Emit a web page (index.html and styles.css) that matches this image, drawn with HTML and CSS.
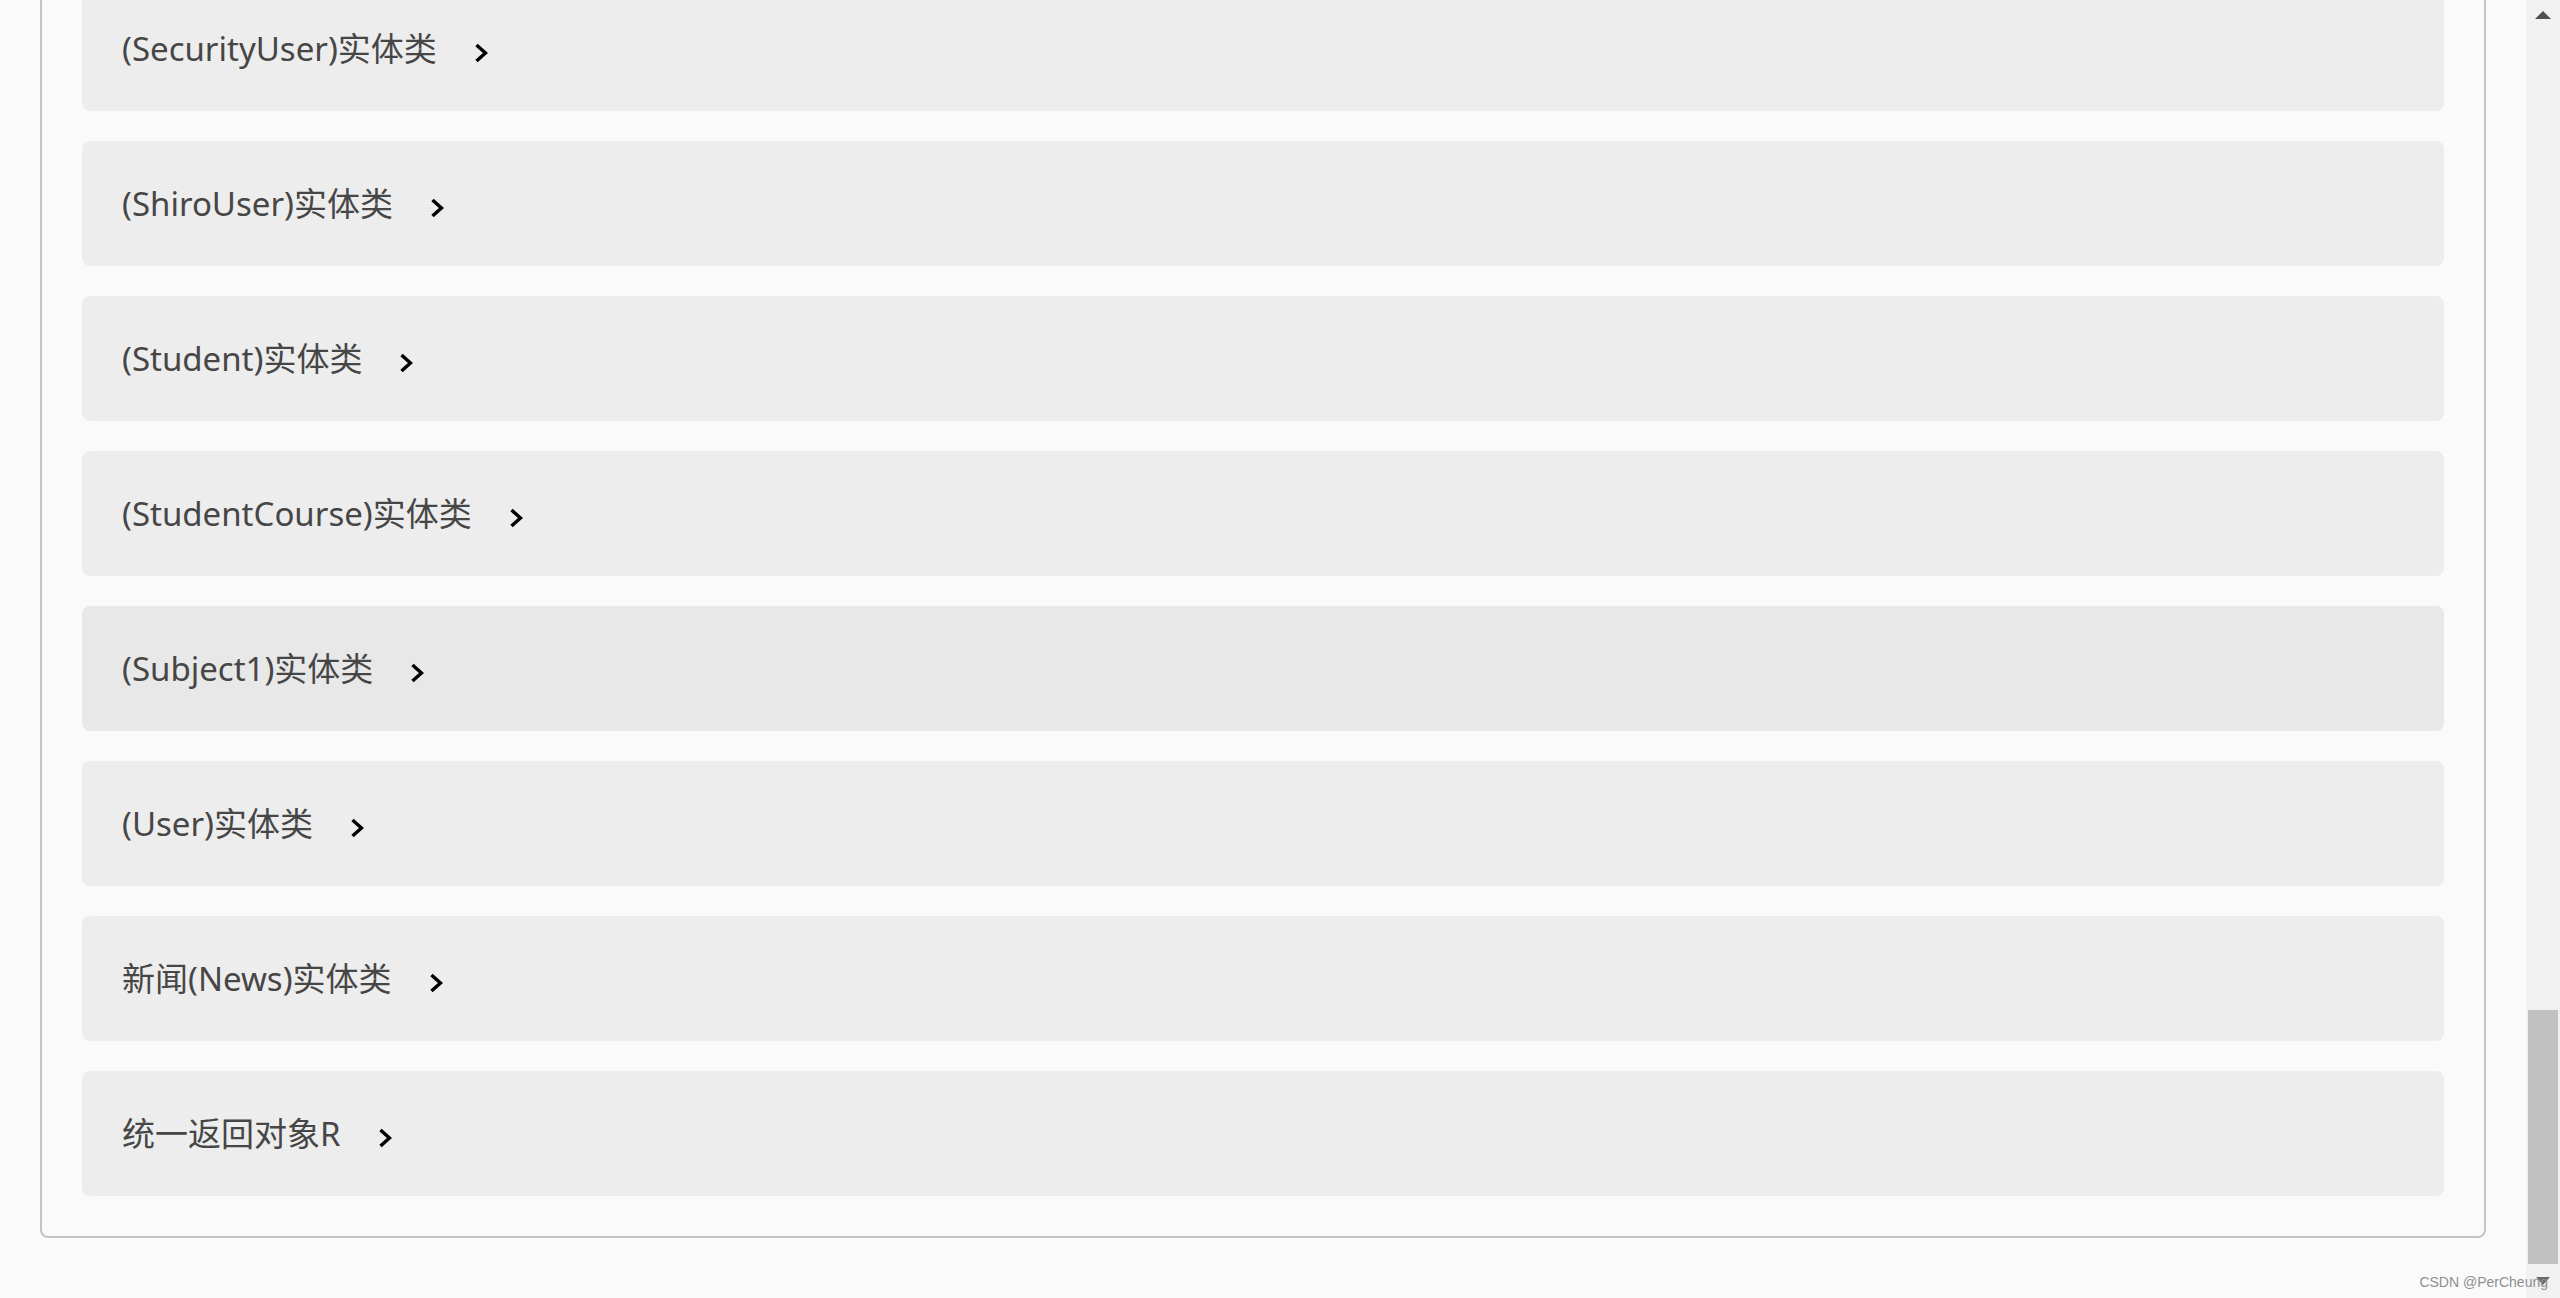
FILE: index.html
```html
<!DOCTYPE html>
<html lang="zh-CN">
<head>
    <meta charset="UTF-8">
    <meta name="viewport" content="width=device-width, initial-scale=1.0">
    <title>实体类</title>
    <link rel="stylesheet" href="styles.css">
</head>
<body>

    <div class="page">
        <main class="content">
            <div class="panel">
                <div class="item">
                    <span class="item-title">(SecurityUser)实体类</span>
                    <svg class="chevron" viewBox="0 0 14 20"><path d="M2.5 2 L11.5 10 L2.5 18"/></svg>
                </div>
                <div class="item">
                    <span class="item-title">(ShiroUser)实体类</span>
                    <svg class="chevron" viewBox="0 0 14 20"><path d="M2.5 2 L11.5 10 L2.5 18"/></svg>
                </div>
                <div class="item">
                    <span class="item-title">(Student)实体类</span>
                    <svg class="chevron" viewBox="0 0 14 20"><path d="M2.5 2 L11.5 10 L2.5 18"/></svg>
                </div>
                <div class="item">
                    <span class="item-title">(StudentCourse)实体类</span>
                    <svg class="chevron" viewBox="0 0 14 20"><path d="M2.5 2 L11.5 10 L2.5 18"/></svg>
                </div>
                <div class="item hover">
                    <span class="item-title">(Subject1)实体类</span>
                    <svg class="chevron" viewBox="0 0 14 20"><path d="M2.5 2 L11.5 10 L2.5 18"/></svg>
                </div>
                <div class="item">
                    <span class="item-title">(User)实体类</span>
                    <svg class="chevron" viewBox="0 0 14 20"><path d="M2.5 2 L11.5 10 L2.5 18"/></svg>
                </div>
                <div class="item">
                    <span class="item-title">新闻(News)实体类</span>
                    <svg class="chevron" viewBox="0 0 14 20"><path d="M2.5 2 L11.5 10 L2.5 18"/></svg>
                </div>
                <div class="item">
                    <span class="item-title">统一返回对象R</span>
                    <svg class="chevron" viewBox="0 0 14 20"><path d="M2.5 2 L11.5 10 L2.5 18"/></svg>
                </div>
            </div>
        </main>

        <div class="scrollbar">
            <div class="scroll-btn"><span class="arrow-up"></span></div>
            <div class="track"><div class="thumb"></div></div>
            <div class="scroll-btn"><span class="arrow-down"></span></div>
        </div>

        <div class="watermark">CSDN @PerCheung</div>
    </div>

</body>
</html>
```

FILE: styles.css
```css
body {
    margin: 0;
    background-color: #fafafa;
    font-family: "Noto Sans", "Noto Sans CJK SC", sans-serif;
}
.page {
    position: relative;
    display: flex;
    height: 100vh;
    overflow: hidden;
}
.content {
    flex: 1;
    padding: 0 40px;
}
.panel {
    margin-top: -56px;
    padding: 40px;
    border: 2px solid #c4c3c9;
    border-radius: 8px;
    display: flex;
    flex-direction: column;
    gap: 30px;
}
.item {
    display: flex;
    align-items: center;
    height: 125px;
    padding: 0 40px;
    background-color: #ededed;
    border-radius: 8px;
}
.item.hover {
    background-color: #e8e8e8;
}
.item-title {
    font-size: 33px;
    line-height: 45px;
    color: #464646;
}
.chevron {
    width: 14px;
    height: 20px;
    margin-left: 37px;
    margin-top: 8px;
}
.chevron path {
    fill: none;
    stroke: #000;
    stroke-width: 3.5;
}
.scrollbar {
    width: 34px;
    display: flex;
    flex-direction: column;
    background-color: #f1f1f1;
}
.scroll-btn {
    height: 34px;
    display: flex;
    justify-content: center;
    align-items: center;
}
.arrow-up {
    width: 0;
    height: 0;
    border-left: 8px solid transparent;
    border-right: 8px solid transparent;
    border-bottom: 8px solid #505050;
    margin-top: -4px;
}
.arrow-down {
    width: 0;
    height: 0;
    border-left: 7px solid transparent;
    border-right: 7px solid transparent;
    border-top: 8px solid #6a6a6a;
}
.track {
    flex: 1;
    display: flex;
    flex-direction: column;
    justify-content: flex-end;
}
.thumb {
    height: 254px;
    margin: 0 2px;
    background-color: #c1c1c1;
}
.watermark {
    position: absolute;
    right: 12px;
    bottom: 8px;
    font-family: "Liberation Sans", Arial, sans-serif;
    font-size: 14px;
    color: #8f8f8f;
}
```
